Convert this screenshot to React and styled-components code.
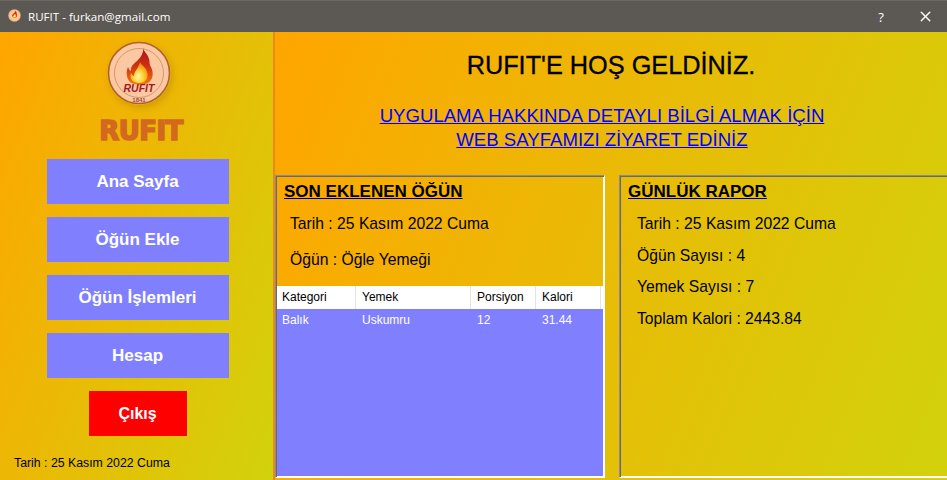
import React from "react";
import styled, { createGlobalStyle } from "styled-components";
import { X } from "lucide-react";

const menuItems = ["Ana Sayfa", "Öğün Ekle", "Öğün İşlemleri", "Hesap"];

const columns = [
  { title: "Kategori", width: 79 },
  { title: "Yemek", width: 115 },
  { title: "Porsiyon", width: 65 },
  { title: "Kalori", width: 65 },
];

const meals = [["Balık", "Uskumru", "12", "31.44"]];

const report = ["Öğün Sayısı : 4", "Yemek Sayısı : 7", "Toplam Kalori : 2443.84"];

// flame logo, the small one in the title bar has no lettering
const Logo = ({ size, lettering }) => (
  <svg width={size} height={size} viewBox="0 0 64 64">
    <defs>
      <linearGradient id="flameOuter" x1="0" y1="0" x2="0" y2="1">
        <stop offset="0" stopColor="#a8101c" />
        <stop offset="0.5" stopColor="#d2300f" />
        <stop offset="1" stopColor="#f07a10" />
      </linearGradient>
      <radialGradient id="flameCore" cx="0.45" cy="0.7" r="0.65">
        <stop offset="0" stopColor="#fff6b0" />
        <stop offset="0.5" stopColor="#ffcf30" />
        <stop offset="1" stopColor="#f7860f" />
      </radialGradient>
    </defs>
    <circle cx="32" cy="32" r="30.5" fill="#fcc8a2" stroke="#b1622c" strokeWidth="1.6" />
    <circle cx="32" cy="32" r="24.5" fill="none" stroke="#c98a68" strokeWidth="0.8" />
    <path
      d="M36 7c1 4 5 6 6 11 1 3 0 5 2 8 3 6 2 13-3 16-5 3-14 2-18-1-4-4-4-11-2-15 1 2 1 3 3 4-1-5 4-8 7-11 3-3 6-8 5-12z"
      fill="url(#flameOuter)"
    />
    <path
      d="M33 21c1 3 6 5 7 10 2 6-1 11-8 11-6 0-10-4-8-10 1 2 2 3 3 3 0-5 5-8 6-14z"
      fill="url(#flameCore)"
    />
    {lettering && (
      <>
        <LogoName x="32" y="50.5" textAnchor="middle">RUFIT</LogoName>
        <LogoYear x="32" y="60.5" textAnchor="middle">1841</LogoYear>
      </>
    )}
  </svg>
);

const App = () => {
  return (
    <Window>
      <GlobalStyle />
      <TitleBar>
        <TitleIcon>
          <Logo size={13} />
        </TitleIcon>
        <TitleText>RUFIT - furkan@gmail.com</TitleText>
        <HelpButton>?</HelpButton>
        <CloseButton>
          <X size={17} strokeWidth={1.4} absoluteStrokeWidth />
        </CloseButton>
      </TitleBar>
      <Body>
        <Sidebar>
          <LogoWrap>
            <Logo size={64} lettering />
          </LogoWrap>
          <BrandName>RUFIT</BrandName>
          <Menu>
            {menuItems.map((item) => (
              <MenuButton key={item}>{item}</MenuButton>
            ))}
          </Menu>
          <ExitButton>Çıkış</ExitButton>
          <SideDate>Tarih : 25 Kasım 2022 Cuma</SideDate>
        </Sidebar>
        <Main>
          <Hero>
            <Welcome>RUFIT'E HOŞ GELDİNİZ.</Welcome>
            <SiteLink href="#">
              UYGULAMA HAKKINDA DETAYLI BİLGİ ALMAK İÇİN
              <br />
              WEB SAYFAMIZI ZİYARET EDİNİZ
            </SiteLink>
          </Hero>
          <Panels>
            <Panel>
              <PanelTitle>SON EKLENEN ÖĞÜN</PanelTitle>
              <LastInfo>
                <InfoLine>Tarih : 25 Kasım 2022 Cuma</InfoLine>
                <InfoLine>Öğün : Öğle Yemeği</InfoLine>
              </LastInfo>
              <Grid>
                <HeaderRow>
                  {columns.map((col) => (
                    <HeaderCell key={col.title} $width={col.width}>
                      {col.title}
                    </HeaderCell>
                  ))}
                </HeaderRow>
                {meals.map((meal) => (
                  <DataRow key={meal[1]}>
                    {meal.map((value, i) => (
                      <DataCell key={value} $width={columns[i].width}>
                        {value}
                      </DataCell>
                    ))}
                  </DataRow>
                ))}
              </Grid>
            </Panel>
            <Panel>
              <PanelTitle>GÜNLÜK RAPOR</PanelTitle>
              <ReportList>
                <InfoLine>Tarih : 25 Kasım 2022 Cuma</InfoLine>
                {report.map((line) => (
                  <InfoLine key={line}>{line}</InfoLine>
                ))}
              </ReportList>
            </Panel>
          </Panels>
        </Main>
      </Body>
    </Window>
  );
};

const GlobalStyle = createGlobalStyle`
  html, body {
    margin: 0;
    height: 100%;
    overflow: hidden;
  }
  * {
    box-sizing: border-box;
  }
`;

const Window = styled.div`
  width: 947px;
  height: 480px;
  display: flex;
  flex-direction: column;
  overflow: hidden;
  font-family: "Liberation Sans", Arial, sans-serif;
`;

const TitleBar = styled.div`
  height: 32px;
  flex: none;
  display: flex;
  align-items: center;
  padding-left: 8px;
  background: #5c5854;
  border-top: 1px solid #6a6662;
  color: #fff;
`;

const TitleIcon = styled.div`
  width: 13px;
  height: 13px;
  display: flex;
  margin-top: -2px;
`;

const TitleText = styled.div`
  margin-left: 7px;
  flex: 1;
  font-family: "Open Sans", sans-serif;
  font-size: 11.6px;
`;

const HelpButton = styled.div`
  width: 46px;
  margin-right: -1px;
  text-align: center;
  font-family: "Open Sans", sans-serif;
  font-size: 13px;
`;

const CloseButton = styled.div`
  width: 44px;
  display: flex;
  justify-content: center;
`;

const Body = styled.div`
  flex: 1;
  display: flex;
  min-height: 0;
`;

const Sidebar = styled.div`
  width: 275px;
  flex: none;
  display: flex;
  flex-direction: column;
  align-items: center;
  padding-left: 2px;
  border-right: 2px solid #eb8a1a;
  background: linear-gradient(112deg, #ffa500 0%, #d2d20c 100%);
`;

const LogoWrap = styled.div`
  margin-top: 9px;
  margin-left: 3px;
  width: 64px;
  height: 64px;
  border-radius: 50%;
  box-shadow: 2px 3px 6px rgba(150, 100, 0, 0.3);
`;

const LogoName = styled.text`
  font-family: "Liberation Sans", sans-serif;
  font-size: 10.5px;
  font-weight: bold;
  font-style: italic;
  fill: #a01826;
`;

const LogoYear = styled.text`
  font-family: "Liberation Sans", sans-serif;
  font-size: 6px;
  font-weight: bold;
  fill: #a04a3a;
`;

const BrandName = styled.div`
  margin-top: 14px;
  margin-left: 7px;
  height: 24px;
  font-family: "DejaVu Sans", sans-serif;
  font-size: 26px;
  line-height: 24px;
  font-weight: bold;
  letter-spacing: -0.6px;
  color: #d2691e;
  -webkit-text-stroke: 1.6px #d2691e;
`;

const Menu = styled.div`
  margin-top: 16px;
  display: flex;
  flex-direction: column;
  gap: 13px;
`;

const MenuButton = styled.div`
  width: 182px;
  height: 45px;
  display: flex;
  align-items: center;
  justify-content: center;
  background: #8080ff;
  color: #fff;
  font-size: 17px;
  font-weight: bold;
`;

const ExitButton = styled.div`
  margin-top: 13px;
  width: 98px;
  height: 45px;
  display: flex;
  align-items: center;
  justify-content: center;
  background: #ff0000;
  color: #fff;
  font-size: 16px;
  font-weight: bold;
`;

const SideDate = styled.div`
  align-self: flex-start;
  margin: 20px 0 0 12px;
  font-size: 12.3px;
  line-height: 14px;
  color: #000;
`;

const Main = styled.div`
  flex: 1;
  min-width: 0;
  display: flex;
  flex-direction: column;
  background: linear-gradient(112deg, #ffa500 0%, #d2d20c 100%);
`;

const Hero = styled.div`
  height: 143px;
  flex: none;
  display: flex;
  flex-direction: column;
  align-items: center;
`;

const Welcome = styled.div`
  margin-top: 19px;
  font-size: 25.3px;
  line-height: 28px;
  color: #000;
  -webkit-text-stroke: 0.3px #000;
`;

const SiteLink = styled.a`
  margin: 25px 18px 0 0;
  text-align: center;
  font-size: 18.6px;
  line-height: 24px;
  color: #0000ff;
  text-decoration: underline;
`;

const Panels = styled.div`
  height: 303px;
  flex: none;
  display: flex;
  gap: 14px;
`;

const Panel = styled.div`
  width: 330px;
  flex: none;
  display: flex;
  flex-direction: column;
  padding: 1px;
  border: 1px solid;
  border-color: #8c8c8c #fff #fff #8c8c8c;
  box-shadow: inset 1px 1px 0 #696969, inset -1px -1px 0 #fff;
`;

const PanelTitle = styled.div`
  margin: 5px 0 0 7px;
  align-self: flex-start;
  font-size: 17px;
  line-height: 20px;
  font-weight: bold;
  color: #000;
  text-decoration: underline;
`;

const LastInfo = styled.div`
  height: 84px;
  display: flex;
  flex-direction: column;
  gap: 18px;
  padding: 13px 0 0 13px;
`;

const ReportList = styled.div`
  display: flex;
  flex-direction: column;
  gap: 13.6px;
  padding: 13px 0 0 16px;
`;

const InfoLine = styled.div`
  font-size: 15.7px;
  line-height: 18px;
  color: #000;
`;

const Grid = styled.div`
  flex: 1;
  background: #8080ff;
  font-size: 12px;
`;

const HeaderRow = styled.div`
  height: 23px;
  display: flex;
  background: #fff;
  color: #000;
`;

const HeaderCell = styled.div`
  width: ${(p) => p.$width}px;
  padding-left: 6px;
  line-height: 23px;
  border-right: 1px solid #e4e4e4;

  &:first-child {
    padding-left: 5px;
  }
`;

const DataRow = styled.div`
  height: 22px;
  display: flex;
  color: #fff;
`;

const DataCell = styled.div`
  width: ${(p) => p.$width}px;
  padding-left: 6px;
  line-height: 23px;

  &:first-child {
    padding-left: 5px;
  }
`;

export default App;
